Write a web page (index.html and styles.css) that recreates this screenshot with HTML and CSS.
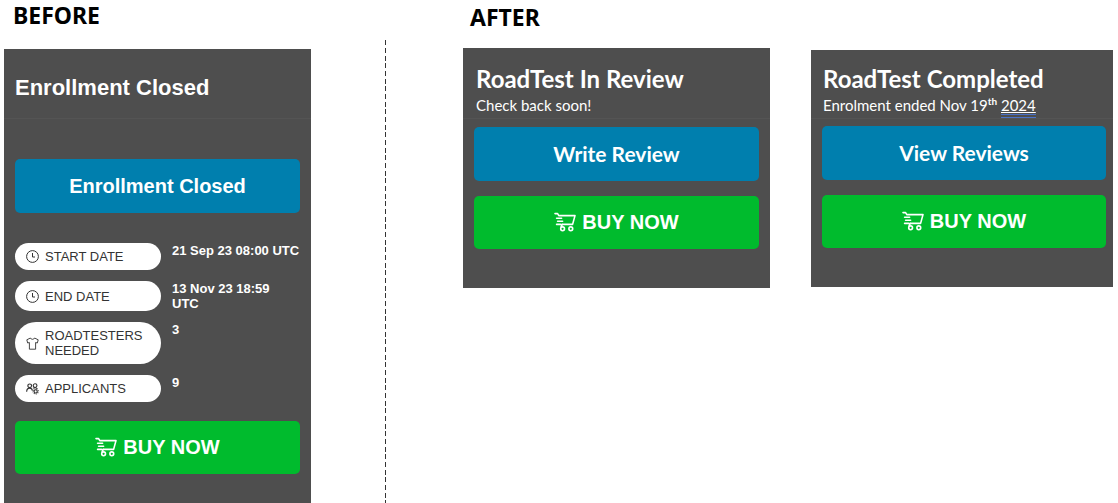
FILE: index.html
```html
<!DOCTYPE html>
<html lang="en">
<head>
<meta charset="utf-8">
<title>RoadTest enrollment panel: before and after</title>
<link rel="stylesheet" href="styles.css">
</head>
<body>
<svg class="sprite" aria-hidden="true">
  <symbol id="cart" viewBox="0 0 22 20">
    <g fill="none" stroke="currentColor" stroke-width="1.6" stroke-linecap="round" stroke-linejoin="round">
      <path d="M1 1.600h2.600l1.200 2H21l-2.400 8.800H8.200"/>
      <path d="M2.600 6.200h5M3.600 9.200h5M2.600 12.400h4M8.200 12.400l-1 2.200"/>
      <circle cx="8.600" cy="16.800" r="1.900"/>
      <circle cx="16.800" cy="16.800" r="1.900"/>
    </g>
  </symbol>
  <symbol id="clock" viewBox="0 0 13 13">
    <g fill="none" stroke="currentColor" stroke-width="1">
      <circle cx="6.500" cy="6.500" r="5.900"/>
      <path d="M6.500 3v4H9"/>
    </g>
  </symbol>
  <symbol id="shirt" viewBox="0 0 13 13">
    <path fill="none" stroke="currentColor" stroke-width=".9" stroke-linejoin="round" d="M4.400 1L.8 2.800l.9 3.200 1.700-.5V12.200h6.200V5.500l1.700.5.9-3.200L8.600 1C8 2.800 5 2.800 4.400 1z"/>
  </symbol>
  <symbol id="people" viewBox="0 0 14 13">
    <g fill="none" stroke="currentColor" stroke-width="1.200">
      <circle cx="4" cy="3.600" r="2"/>
      <circle cx="9.800" cy="3.400" r="2"/>
      <path d="M.7 10c.1-2.400 1.300-3.900 3.300-3.900 1.600 0 2.600 1 2.900 2.600M7.600 6.200c1.200-.8 3.600-.6 4.600.6"/>
      <circle cx="10.400" cy="9.600" r="1.700"/>
      <path stroke-dasharray="1 1.200" d="M7.600 9.600a2.800 2.800 0 1 0 5.600 0a2.800 2.800 0 1 0-5.600 0"/>
    </g>
  </symbol>
</svg>
<main class="page">
  <section class="column">
    <h1 class="label">BEFORE</h1>
    <article class="card card-before">
      <header class="card-head">
        <h2 class="card-title">Enrollment Closed</h2>
      </header>
      <button class="btn btn-blue" type="button">Enrollment Closed</button>
      <dl class="facts">
        <div class="fact">
          <dt class="pill"><svg class="pill-icon"><use href="#clock"/></svg>START DATE</dt>
          <dd class="value">21 Sep 23 08:00 UTC</dd>
        </div>
        <div class="fact">
          <dt class="pill"><svg class="pill-icon"><use href="#clock"/></svg>END DATE</dt>
          <dd class="value">13 Nov 23 18:59<br>UTC</dd>
        </div>
        <div class="fact">
          <dt class="pill"><svg class="pill-icon"><use href="#shirt"/></svg>ROADTESTERS NEEDED</dt>
          <dd class="value">3</dd>
        </div>
        <div class="fact">
          <dt class="pill"><svg class="pill-icon"><use href="#people"/></svg>APPLICANTS</dt>
          <dd class="value">9</dd>
        </div>
      </dl>
      <button class="btn btn-green" type="button"><svg class="cart"><use href="#cart"/></svg>BUY NOW</button>
    </article>
  </section>
  <div class="divider"></div>
  <section class="column">
    <h1 class="label label-after">AFTER</h1>
    <div class="cards">
      <article class="card card-review">
        <header class="card-head">
          <h2 class="card-title">RoadTest In Review</h2>
          <p class="note">Check back soon!</p>
        </header>
        <button class="btn btn-blue" type="button">Write Review</button>
        <button class="btn btn-green" type="button"><svg class="cart"><use href="#cart"/></svg>BUY NOW</button>
      </article>
      <article class="card card-completed">
        <header class="card-head">
          <h2 class="card-title">RoadTest Completed</h2>
          <p class="note">Enrolment ended Nov 19<sup class="ordinal">th</sup> <span class="flagged">2024</span></p>
        </header>
        <button class="btn btn-blue" type="button">View Reviews</button>
        <button class="btn btn-green" type="button"><svg class="cart"><use href="#cart"/></svg>BUY NOW</button>
      </article>
    </div>
  </section>
</main>
</body>
</html>
```
FILE: styles.css
```css
* {
  box-sizing: border-box;
}

body {
  margin: 0;
  background: #fff;
  color: #fff;
  font-family: "Liberation Sans", Arial, sans-serif;
}

h1, h2, p, dl, dd {
  margin: 0;
}

.sprite {
  position: absolute;
  width: 0;
  height: 0;
}

.page {
  display: grid;
  grid-template-columns: 307fr 152px 650fr;
  min-height: 100vh;
  padding: 0 5px 0 4px;
}

.column {
  display: flex;
  flex-direction: column;
}

.label {
  height: 48px;
  padding: 1px 0 0 9px;
  color: #000;
  font: bold 23px/28px "Noto Sans", sans-serif;
}

.label-after {
  padding: 3px 0 0 7px;
}

.divider {
  width: 1px;
  margin: 40px 0 0 74px;
  background: repeating-linear-gradient(#333 0 5px, #fff 5px 8px, #333 8px 13px, #fff 13px 16px, #333 16px 21px, #fff 21px 23px);
}

.card {
  display: flex;
  flex-direction: column;
  background: #4e4e4e;
}

.card-before {
  flex: 1;
  margin-top: 1px;
  padding: 0 11px 29px;
}

.card-head {
  border-bottom: 1px solid #545454;
}

.card-before .card-head {
  height: 70px;
  margin: 0 -11px 40px;
  padding: 25px 11px 0;
}

.card-title {
  font-size: 22px;
  line-height: 28px;
}

.btn {
  display: flex;
  align-items: center;
  justify-content: center;
  gap: 6px;
  width: 100%;
  height: 54px;
  padding: 0;
  border: 0;
  border-radius: 5px;
  color: #fff;
  font: bold 20px/24px "Liberation Sans", Arial, sans-serif;
}

.btn-blue {
  background: #007fae;
}

.btn-green {
  height: 53px;
  padding-bottom: 1px;
  background: #00bb2d;
}

.cart {
  width: 22px;
  height: 20px;
}

.facts {
  display: flex;
  flex-direction: column;
  gap: 11px;
  margin: 30px 0 19px;
}

.fact {
  display: grid;
  grid-template-columns: 146px 1fr;
  gap: 11px;
  font-size: 13px;
  line-height: 15px;
}

.pill {
  display: flex;
  align-items: center;
  gap: 6px;
  padding: 6px 12px 6px 11px;
  border-radius: 21px;
  background: #fff;
  color: #333;
}

.pill-icon {
  flex: none;
  width: 13px;
  height: 13px;
}

.value {
  font-weight: bold;
}

.cards {
  display: grid;
  grid-template-columns: 307fr 302fr;
  align-items: start;
  gap: 41px;
}

.cards .card {
  gap: 15px;
  padding: 0 11px 39px;
}

.cards .card-head {
  height: 71px;
  margin: 0 -11px -7px;
  padding: 16px 13px 0;
}

.cards .card-completed {
  margin-top: 2px;
  padding-right: 7px;
}

.card-completed .card-head {
  height: 69px;
  margin: 0 -7px -8px -11px;
  padding: 14px 12px 0;
}

.cards .card-title {
  font: bold 24px/30px Lato, sans-serif;
}

.note {
  font: 15px/22px Lato, sans-serif;
}

.cards .btn-blue {
  font-family: Lato, sans-serif;
  font-size: 21px;
}

.ordinal {
  font-size: 10px;
  font-weight: bold;
  line-height: 0;
}

.flagged {
  border-bottom: 4px double #4a72c8;
  text-decoration: underline;
}
```
